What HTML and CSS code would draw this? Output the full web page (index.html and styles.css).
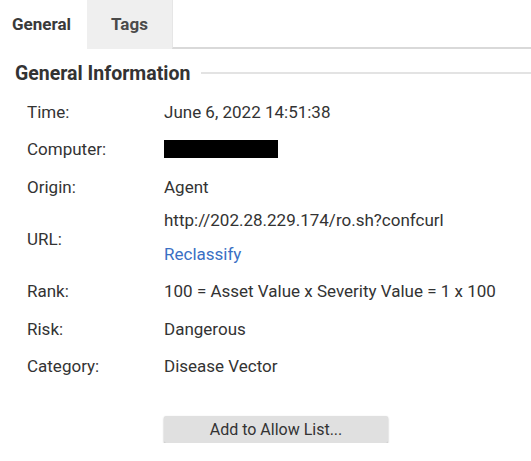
FILE: index.html
```html
<!DOCTYPE html>
<html>
<head>
<meta charset="utf-8">
<link rel="stylesheet" href="styles.css">
</head>
<body>
<div class="tabs">
  <div class="tab active">General</div>
  <div class="tab">Tags</div>
  <div class="tab-rest"></div>
</div>
<div class="section">
  <div class="section-title">General Information</div>
  <div class="section-line"></div>
</div>
<div class="details">
  <div class="label">Time:</div>
  <div class="value">June 6, 2022 14:51:38</div>
  <div class="label">Computer:</div>
  <div class="value"><span class="redact"></span></div>
  <div class="label">Origin:</div>
  <div class="value">Agent</div>
  <div class="label tall">URL:</div>
  <div class="value tall">
    <div class="line first">http://202.28.229.174/ro.sh?confcurl</div>
    <div class="line second"><a class="link" href="#">Reclassify</a></div>
  </div>
  <div class="label">Rank:</div>
  <div class="value">100 = Asset Value x Severity Value = 1 x 100</div>
  <div class="label">Risk:</div>
  <div class="value">Dangerous</div>
  <div class="label">Category:</div>
  <div class="value">Disease Vector</div>
</div>
<div class="actions">
  <button class="btn">Add to Allow List...</button>
</div>
</body>
</html>
```
FILE: styles.css
```css
html, body {
  margin: 0;
  padding: 0;
  background: #ffffff;
  font-family: Roboto, "Liberation Sans", sans-serif;
  color: #333333;
}

.tabs {
  display: flex;
  height: 49px;
}

.tab {
  display: flex;
  align-items: center;
  justify-content: center;
  font-size: 17px;
  font-weight: bold;
  color: #3a3a3a;
  padding-bottom: 2px;
  box-sizing: border-box;
}

.tab.active {
  width: 87px;
  background: #ffffff;
  padding-right: 4px;
}

.tab:not(.active) {
  width: 85px;
  background: #efefef;
  color: #4a4a4a;
}

.tab-rest {
  flex: 1;
  border-bottom: 2px solid #d9d9d9;
  border-left: 1px solid #e6e6e6;
}

.section {
  display: flex;
  align-items: center;
  gap: 11px;
  padding-left: 15px;
  padding-top: 4px;
  height: 40px;
}

.section-title {
  font-size: 19.5px;
  font-weight: bold;
  color: #333333;
  white-space: nowrap;
}

.section-line {
  flex: 1;
  height: 2px;
  background: #e3e3e3;
}

.details {
  display: grid;
  grid-template-columns: 137px 1fr;
  padding-left: 27px;
  font-size: 17px;
  color: #333333;
}

.label, .value {
  height: 37.5px;
  display: flex;
  align-items: center;
  white-space: nowrap;
}

.label.tall {
  height: 67px;
}

.value.tall {
  height: 67px;
  flex-direction: column;
  align-items: flex-start;
  justify-content: flex-start;
}

.line {
  display: flex;
  align-items: center;
}

.line.first {
  height: 29px;
}

.line.second {
  height: 38px;
}

.link {
  color: #3a6fc4;
  text-decoration: none;
}

.redact {
  display: inline-block;
  width: 114px;
  height: 18px;
  background: #000000;
}

.actions {
  padding-left: 164px;
  padding-top: 31px;
}

.btn {
  width: 224px;
  height: 27px;
  border: none;
  border-radius: 2px;
  background: #e0e0e0;
  box-shadow: 0 1px 2px rgba(0, 0, 0, 0.35);
  font-family: Roboto, "Liberation Sans", sans-serif;
  font-size: 16px;
  color: #333333;
  padding: 0;
}
```
